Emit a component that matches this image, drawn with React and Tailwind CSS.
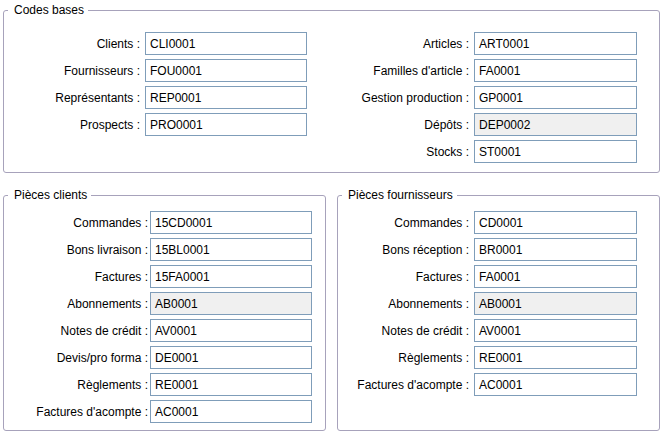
import React from 'react';

const topLeft = [
  ['Clients', 'CLI0001'],
  ['Fournisseurs', 'FOU0001'],
  ['Représentants', 'REP0001'],
  ['Prospects', 'PRO0001'],
];

const topRight = [
  ['Articles', 'ART0001'],
  ["Familles d'article", 'FA0001'],
  ['Gestion production', 'GP0001'],
  ['Dépôts', 'DEP0002', true],
  ['Stocks', 'ST0001'],
];

const clients = [
  ['Commandes', '15CD0001'],
  ['Bons livraison', '15BL0001'],
  ['Factures', '15FA0001'],
  ['Abonnements', 'AB0001', true],
  ['Notes de crédit', 'AV0001'],
  ['Devis/pro forma', 'DE0001'],
  ['Règlements', 'RE0001'],
  ["Factures d'acompte", 'AC0001'],
];

const fournisseurs = [
  ['Commandes', 'CD0001'],
  ['Bons réception', 'BR0001'],
  ['Factures', 'FA0001'],
  ['Abonnements', 'AB0001', true],
  ['Notes de crédit', 'AV0001'],
  ['Règlements', 'RE0001'],
  ["Factures d'acompte", 'AC0001'],
];

function Field({ label, value, disabled, labelW, gap, inputW }) {
  return (
    <div className="flex items-center h-[23px]">
      <div className={`${labelW} text-right whitespace-nowrap`}>{label} :</div>
      <div
        className={`${gap} ${inputW} h-[23px] border border-[#7f9db9] pl-[4px] flex items-center whitespace-nowrap ${
          disabled ? 'bg-[#f0f0f0]' : 'bg-white'
        }`}
      >
        {value}
      </div>
    </div>
  );
}

function Column({ rows, labelW, gap, inputW }) {
  return (
    <div className="flex flex-col gap-[4px]">
      {rows.map(([label, value, disabled]) => (
        <Field key={label} label={label} value={value} disabled={disabled} labelW={labelW} gap={gap} inputW={inputW} />
      ))}
    </div>
  );
}

function GroupBox({ title, className, children }) {
  return (
    <fieldset className={`border border-[#a7a2bb] rounded-[3px] ${className}`}>
      <legend className="ml-[4px] pl-[6px] pr-[4px] leading-[14px]">{title}</legend>
      {children}
    </fieldset>
  );
}

export default function App() {
  return (
    <div
      className="w-[664px] h-[435px] bg-white text-black text-[12px] px-[3px] pt-[3px]"
      style={{ fontFamily: '"Liberation Sans", Arial, sans-serif' }}
    >
      <GroupBox title="Codes bases" className="w-[657px] pt-[15px] pb-[9px]">
        <div className="flex items-start">
          <Column rows={topLeft} labelW="w-[136px]" gap="ml-[5px]" inputW="w-[162px]" />
          <Column rows={topRight} labelW="w-[162px]" gap="ml-[5px]" inputW="w-[163px]" />
        </div>
      </GroupBox>
      <div className="flex items-stretch mt-[15px] gap-[11px]">
        <GroupBox title="Pièces clients" className="w-[323px] pt-[9px] pb-[7px]">
          <Column rows={clients} labelW="w-[144px]" gap="ml-[2px]" inputW="w-[162px]" />
        </GroupBox>
        <GroupBox title="Pièces fournisseurs" className="w-[323px] pt-[9px] pb-[7px]">
          <Column rows={fournisseurs} labelW="w-[131px]" gap="ml-[5px]" inputW="w-[163px]" />
        </GroupBox>
      </div>
    </div>
  );
}
